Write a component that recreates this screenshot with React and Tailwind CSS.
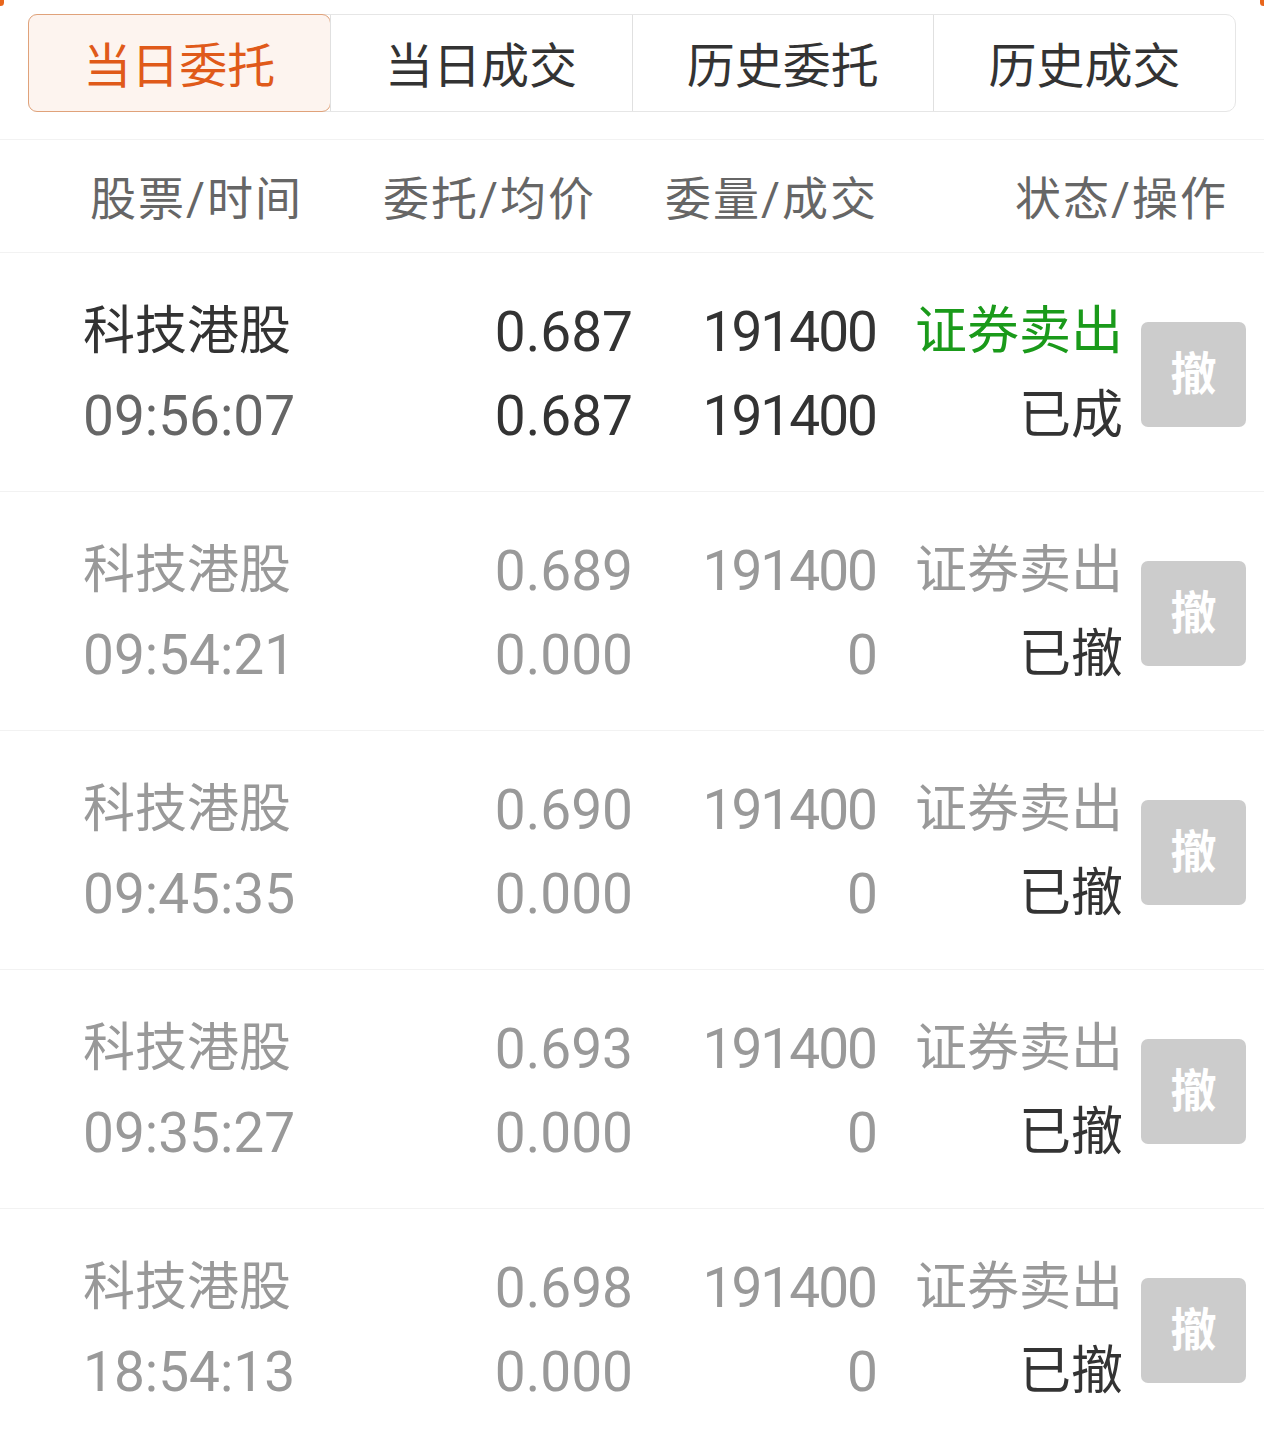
import React from "react";

const FONT = { fontFamily: 'Roboto, "Noto Sans CJK SC", sans-serif' };

const rows = [
  { name: "科技港股", time: "09:56:07", p1: "0.687", p2: "0.687", q1: "191400", q2: "191400", status: "已成", active: true },
  { name: "科技港股", time: "09:54:21", p1: "0.689", p2: "0.000", q1: "191400", q2: "0", status: "已撤" },
  { name: "科技港股", time: "09:45:35", p1: "0.690", p2: "0.000", q1: "191400", q2: "0", status: "已撤" },
  { name: "科技港股", time: "09:35:27", p1: "0.693", p2: "0.000", q1: "191400", q2: "0", status: "已撤" },
  { name: "科技港股", time: "18:54:13", p1: "0.698", p2: "0.000", q1: "191400", q2: "0", status: "已撤" },
];

const tabs = ["当日委托", "当日成交", "历史委托", "历史成交"];

export default function App() {
  return (
    <div className="relative w-[1264px] h-[1445px] bg-white overflow-hidden" style={FONT}>
      <span className="absolute left-[-3px] top-[-4px] w-[7px] h-[10px] rounded-full bg-[#e8661c]" />
      <span className="absolute right-[-3px] top-[-4px] w-[7px] h-[10px] rounded-full bg-[#e8661c]" />

      <div className="pt-[14px] px-[28px]">
        <div className="flex h-[98px] rounded-[10px] border border-[#e6e6e6]">
          {tabs.map((t, i) => (
            <div
              key={t}
              className={
                i === 0
                  ? "flex-1 flex items-center justify-center pt-[8px] -m-px rounded-[9px] border border-[#e0a27a] bg-[#fdf4ef] text-[#e05a1a] text-[48px]"
                  : "flex-1 flex items-center justify-center pt-[8px] border-l border-[#e0e0e0] first:border-l-0 text-[#333333] text-[48px]"
              }
            >
              {t}
            </div>
          ))}
        </div>
      </div>

      <div className="mt-[27px] border-t border-[#f2f2f2] border-b h-[114px] flex items-center pt-[6px] text-[46px] tracking-[2px] text-[#666666]">
        <div className="pl-[90px] w-[383px]">股票/时间</div>
        <div className="w-[282px]">委托/均价</div>
        <div className="w-[350px]">委量/成交</div>
        <div>状态/操作</div>
      </div>

      {rows.map((r, i) => {
        const num = "text-[55px]";
        const c = r.active ? "text-[#333333]" : "text-[#999999]";
        return (
          <div key={i} className="h-[239px] flex items-center border-b border-[#f2f2f2] pl-[83px] pt-[4px] text-[52px] leading-[84px]">
            <div className="w-[301px]">
              <div className={c}>{r.name}</div>
              <div className={num + " " + (r.active ? "text-[#666666]" : "text-[#999999]")}>{r.time}</div>
            </div>
            <div className={"w-[249px] text-right " + num + " " + c}>
              <div>{r.p1}</div>
              <div>{r.p2}</div>
            </div>
            <div className={"w-[245px] text-right " + num + " " + c}>
              <div className="tracking-[-2px] pr-[2px]">{r.q1}</div>
              <div className={r.q2.length > 1 ? "tracking-[-2px] pr-[2px]" : ""}>{r.q2}</div>
            </div>
            <div className="w-[245px] text-right">
              <div className={r.active ? "text-[#1a9a1a]" : "text-[#999999]"}>证券卖出</div>
              <div className="text-[#333333]">{r.status}</div>
            </div>
            <div className="ml-[18px] w-[105px] h-[105px] rounded-[7px] bg-[#cccccc] flex items-center justify-center text-white text-[46px] font-bold leading-none">
              撤
            </div>
          </div>
        );
      })}
    </div>
  );
}
